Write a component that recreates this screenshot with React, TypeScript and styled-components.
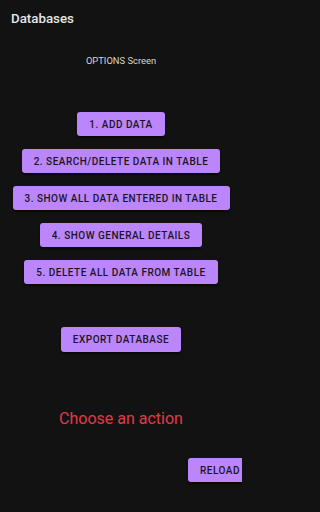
import React from "react";
import styled, { createGlobalStyle } from "styled-components";

const GlobalStyle = createGlobalStyle`
  html, body {
    margin: 0;
    padding: 0;
    background: #121212;
    overflow: hidden;
  }
  body {
    font-family: Roboto, "Liberation Sans", sans-serif;
  }
`;

const Screen = styled.div`
  width: 242px;
  height: 512px;
  background: #121212;
  display: flex;
  flex-direction: column;
  overflow: hidden;
`;

const Header = styled.header`
  padding: 9px 11px 0;
`;

const Title = styled.h1`
  margin: 0;
  font-size: 13.3px;
  line-height: 20px;
  font-weight: 500;
  color: #e6e6e6;
`;

const Content = styled.main`
  display: flex;
  flex-direction: column;
  align-items: center;
  padding-top: 25px;
`;

const Subtitle = styled.div`
  font-size: 9.4px;
  line-height: 14px;
  color: #d6d6d6;
  margin-bottom: 44px;
`;

const MenuList = styled.div`
  display: flex;
  flex-direction: column;
  align-items: center;
  gap: 13px;
`;

const ActionButton = styled.button`
  height: 24px;
  padding: 0 12px;
  border: none;
  border-radius: 3px;
  background: #bb86fc;
  color: #1b1523;
  font-family: Roboto, "Liberation Sans", sans-serif;
  font-size: 10px;
  font-weight: 500;
  letter-spacing: 0.5px;
  white-space: nowrap;
  display: flex;
  align-items: center;
  justify-content: center;
  box-shadow: 0 2px 2px rgba(0, 0, 0, 0.55);
  cursor: pointer;
`;

const ExportButton = styled(ActionButton)`
  margin-top: 43px;
  height: 25px;
`;

const Status = styled.div`
  margin-top: 57px;
  font-size: 16px;
  line-height: 20px;
  color: #e53945;
`;

const ReloadRow = styled.div`
  align-self: stretch;
  display: flex;
  justify-content: flex-end;
  margin-top: 29px;
  margin-right: -10px;
`;

const options = [
  "1. ADD DATA",
  "2. SEARCH/DELETE DATA IN TABLE",
  "3. SHOW ALL DATA ENTERED IN TABLE",
  "4. SHOW GENERAL DETAILS",
  "5. DELETE ALL DATA FROM TABLE",
];

export default function App() {
  return (
    <>
      <GlobalStyle />
      <Screen>
        <Header>
          <Title>Databases</Title>
        </Header>
        <Content>
          <Subtitle>OPTIONS Screen</Subtitle>
          <MenuList>
            {options.map((label) => (
              <ActionButton key={label}>{label}</ActionButton>
            ))}
          </MenuList>
          <ExportButton>EXPORT DATABASE</ExportButton>
          <Status>Choose an action</Status>
          <ReloadRow>
            <ActionButton>RELOAD</ActionButton>
          </ReloadRow>
        </Content>
      </Screen>
    </>
  );
}
